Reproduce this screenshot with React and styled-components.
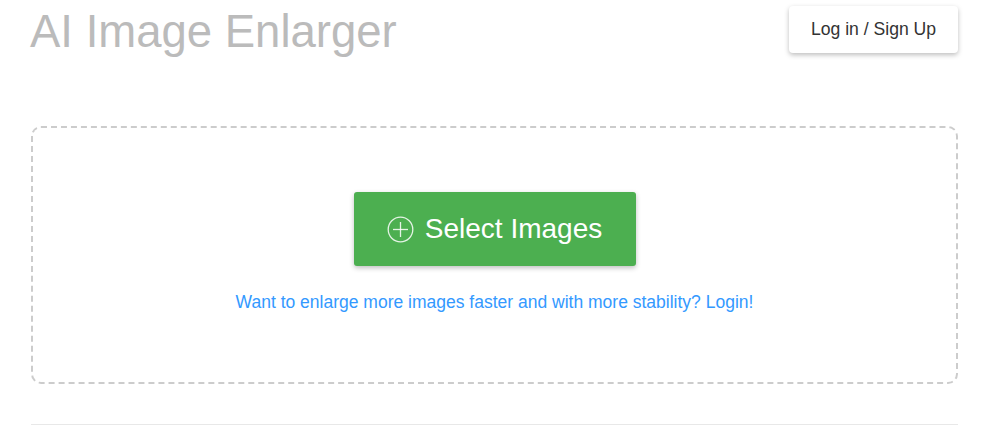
import React from 'react';
import styled, { createGlobalStyle } from 'styled-components';

const GlobalStyle = createGlobalStyle`
  body {
    margin: 0;
    background: #fff;
    font-family: "Liberation Sans", Arial, sans-serif;
  }
`;

const Page = styled.div`
  width: 927px;
  margin-left: 31px;
`;

const Header = styled.header`
  display: flex;
  justify-content: space-between;
  align-items: flex-start;
  height: 126px;
`;

const Title = styled.h1`
  margin: 6px 0 0 -1px;
  font-size: 45.5px;
  font-weight: 400;
  color: #bbb;
  line-height: 52px;
`;

const LoginButton = styled.button`
  margin-top: 6px;
  width: 169px;
  height: 47px;
  background: #fff;
  border: none;
  border-radius: 4px;
  box-shadow: 0 2px 5px rgba(0, 0, 0, 0.26);
  font-family: inherit;
  font-size: 17.6px;
  color: #333;
  cursor: pointer;
`;

const DropZone = styled.div`
  box-sizing: border-box;
  height: 258px;
  border: 2px dashed #ccc;
  border-radius: 10px;
  display: flex;
  flex-direction: column;
  align-items: center;
  padding-top: 64px;
`;

const SelectButton = styled.button`
  width: 282px;
  height: 74px;
  background: #4caf50;
  border: none;
  border-radius: 3px;
  box-shadow: 0 2px 5px rgba(0, 0, 0, 0.25);
  color: #fff;
  font-family: inherit;
  font-size: 28px;
  display: flex;
  align-items: center;
  justify-content: center;
  gap: 11px;
  cursor: pointer;
`;

const LoginHint = styled.a`
  margin-top: 26px;
  font-size: 17.5px;
  color: #3399ff;
  text-decoration: none;
  cursor: pointer;
`;

const Divider = styled.hr`
  margin: 40px 0 0;
  border: none;
  border-top: 1px solid #e8e8e8;
`;

const PlusCircle = () => (
  <svg width="27" height="27" viewBox="0 0 27 27" fill="none" stroke="rgba(255,255,255,0.85)" strokeWidth="1.3">
    <circle cx="13.5" cy="13.5" r="12.3" />
    <line x1="13.5" y1="6" x2="13.5" y2="21" />
    <line x1="6" y1="13.5" x2="21" y2="13.5" />
  </svg>
);

const App = () => (
  <Page>
    <GlobalStyle />
    <Header>
      <Title>AI Image Enlarger</Title>
      <LoginButton>Log in / Sign Up</LoginButton>
    </Header>
    <DropZone>
      <SelectButton>
        <PlusCircle />
        Select Images
      </SelectButton>
      <LoginHint>Want to enlarge more images faster and with more stability? Login!</LoginHint>
    </DropZone>
    <Divider />
  </Page>
);

export default App;
